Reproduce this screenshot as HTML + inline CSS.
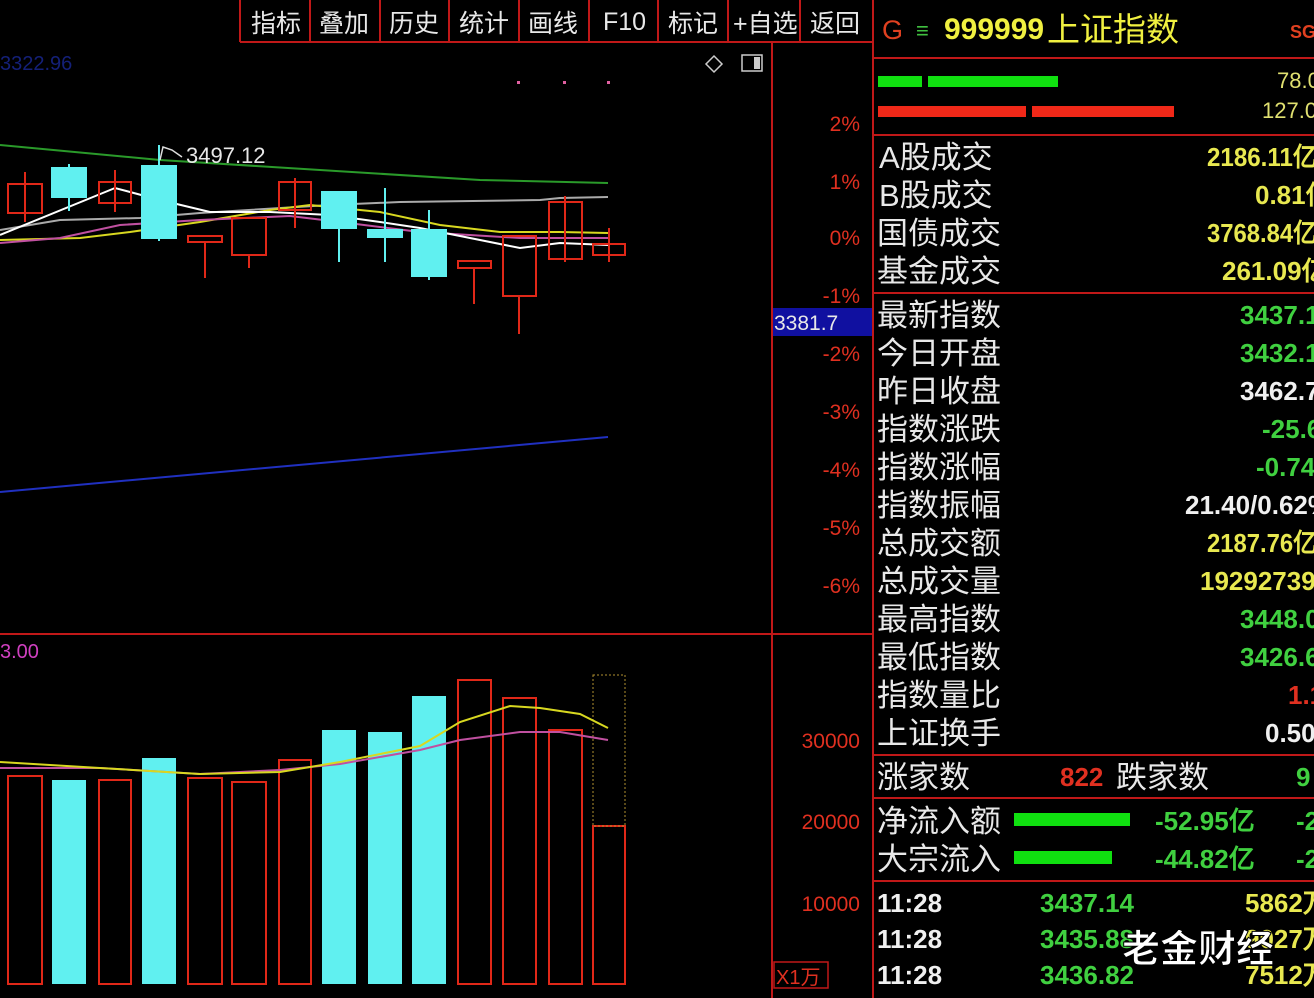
<!DOCTYPE html>
<html><head><meta charset="utf-8"><style>
html,body{margin:0;padding:0;background:#000;width:1314px;height:998px;overflow:hidden}
svg{display:block}
.lb{font-family:"Liberation Sans","Noto Sans CJK SC",sans-serif;font-size:31px;fill:#e8e8e8}
.v{font-family:"Liberation Sans",sans-serif;font-size:26px;font-weight:bold}
.ax{font-family:"Liberation Sans",sans-serif;font-size:21px;fill:#e03020}
.tb{font-family:"Liberation Sans","Noto Sans CJK SC",sans-serif;font-size:25px;fill:#e8e8e8}
</style></head><body>
<svg width="1314" height="998" viewBox="0 0 1314 998" xmlns="http://www.w3.org/2000/svg">
<rect width="1314" height="998" fill="#000"/>
<g stroke="#c01818" stroke-width="2">
<line x1="240" y1="0" x2="240" y2="42"/><line x1="310" y1="0" x2="310" y2="42"/><line x1="380" y1="0" x2="380" y2="42"/><line x1="449" y1="0" x2="449" y2="42"/><line x1="519" y1="0" x2="519" y2="42"/><line x1="589" y1="0" x2="589" y2="42"/><line x1="658" y1="0" x2="658" y2="42"/><line x1="728" y1="0" x2="728" y2="42"/><line x1="800" y1="0" x2="800" y2="42"/>
<line x1="240" y1="42" x2="872" y2="42"/>
<line x1="772" y1="42" x2="772" y2="998"/>
<line x1="873" y1="0" x2="873" y2="998"/>
<line x1="0" y1="634" x2="872" y2="634"/>
<line x1="873" y1="58" x2="1314" y2="58"/>
<line x1="873" y1="135" x2="1314" y2="135"/>
<line x1="873" y1="293" x2="1314" y2="293"/>
<line x1="873" y1="755" x2="1314" y2="755"/>
<line x1="873" y1="798" x2="1314" y2="798"/>
<line x1="873" y1="881" x2="1314" y2="881"/>
</g>
<g class="tb">
<text x="251" y="32">指标</text><text x="319" y="32">叠加</text><text x="389" y="32">历史</text><text x="459" y="32">统计</text><text x="528" y="32">画线</text><text x="603" y="30">F10</text><text x="668" y="32">标记</text><text x="733" y="32">+自选</text><text x="810" y="32">返回</text>
</g>
<text x="0" y="70" font-family="Liberation Sans" font-size="20" fill="#142078">3322.96</text>
<path d="M714 56 L722 64 L714 72 L706 64Z" fill="none" stroke="#ccc" stroke-width="1.5"/>
<rect x="742" y="55" width="20" height="16" fill="none" stroke="#ccc" stroke-width="1.5"/><rect x="754" y="57" width="6" height="12" fill="#ccc"/>
<g fill="#e060a0"><rect x="517" y="81" width="3" height="3"/><rect x="563" y="81" width="3" height="3"/><rect x="607" y="81" width="3" height="3"/></g>
<g class="ax" text-anchor="end">
<text x="860" y="131">2%</text><text x="860" y="189">1%</text><text x="860" y="245">0%</text><text x="860" y="303">-1%</text><text x="860" y="361">-2%</text><text x="860" y="419">-3%</text><text x="860" y="477">-4%</text><text x="860" y="535">-5%</text><text x="860" y="593">-6%</text>
<text x="860" y="748">30000</text><text x="860" y="829">20000</text><text x="860" y="911">10000</text>
</g>
<rect x="773" y="308" width="99" height="28" fill="#1010a0"/>
<text x="774" y="330" font-family="Liberation Sans" font-size="21" fill="#e8e8e8">3381.7</text>
<rect x="774" y="962" width="54" height="26" fill="none" stroke="#c01818" stroke-width="1.5"/>
<text x="776" y="984" font-family="Liberation Sans,Noto Sans CJK SC,sans-serif" font-size="20" fill="#e03020">X1万</text>
<g fill="none" stroke-width="2">
<polyline stroke="#2a9a2a" points="0,145 160,160 480,180 608,183"/>
<polyline stroke="#2030c0" points="0,492 608,437"/>
<polyline stroke="#aaa" points="0,230 60,220 140,218 200,213 330,205 400,202 540,200 560,198 608,197"/>
<polyline stroke="#d8d820" points="0,240 80,238 130,232 200,222 270,210 310,205 380,212 440,225 500,232 560,232 608,233"/>
<polyline stroke="#c050a0" points="0,243 60,238 120,225 200,220 290,216 340,222 420,232 520,238 608,238"/>
<polyline stroke="#fff" points="0,235 115,188 160,200 210,212 270,212 330,215 380,222 420,228 480,240 520,248 560,243 608,245"/>
</g>
<g stroke-width="2">
<g stroke="#e02818" fill="none">
<line x1="25" y1="172" x2="25" y2="222"/><rect x="8" y="184" width="34" height="29"/>
<line x1="115" y1="170" x2="115" y2="212"/><rect x="99" y="182" width="32" height="21"/>
<line x1="205" y1="242" x2="205" y2="278"/><rect x="188" y="236" width="34" height="6"/>
<line x1="249" y1="255" x2="249" y2="268"/><rect x="232" y="218" width="34" height="37"/>
<line x1="295" y1="178" x2="295" y2="228"/><rect x="279" y="182" width="32" height="28"/>
<line x1="474" y1="268" x2="474" y2="304"/><rect x="458" y="261" width="33" height="7"/>
<line x1="519" y1="296" x2="519" y2="334"/><rect x="503" y="236" width="33" height="60"/>
<line x1="565" y1="196" x2="565" y2="262"/><rect x="549" y="202" width="33" height="57"/>
<line x1="609" y1="228" x2="609" y2="262"/><rect x="593" y="244" width="32" height="11"/>
</g>
<g stroke="#60f0f0" fill="#60f0f0">
<line x1="69" y1="164" x2="69" y2="211"/><rect x="52" y="168" width="34" height="29"/>
<line x1="159" y1="145" x2="159" y2="241"/><rect x="142" y="166" width="34" height="72"/>
<line x1="339" y1="192" x2="339" y2="262"/><rect x="322" y="192" width="34" height="36"/>
<line x1="385" y1="188" x2="385" y2="262"/><rect x="368" y="230" width="34" height="7"/>
<line x1="429" y1="210" x2="429" y2="280"/><rect x="412" y="230" width="34" height="46"/>
</g>
</g>
<text x="186" y="163" font-family="Liberation Sans" font-size="22" fill="#e8e8e8">3497.12</text>
<polyline points="160,160 163,147 172,150 182,157" fill="none" stroke="#ddd" stroke-width="1.5"/>
<text x="0" y="658" font-family="Liberation Sans" font-size="20" fill="#d040c0">3.00</text>
<g stroke-width="2">
<g stroke="#e02818" fill="none">
<rect x="8" y="776" width="34" height="208"/><rect x="99" y="780" width="32" height="204"/><rect x="188" y="778" width="34" height="206"/><rect x="232" y="782" width="34" height="202"/><rect x="279" y="760" width="32" height="224"/><rect x="458" y="680" width="33" height="304"/><rect x="503" y="698" width="33" height="286"/><rect x="549" y="730" width="33" height="254"/><rect x="593" y="826" width="32" height="158"/>
</g>
<rect x="593" y="675" width="32" height="151" fill="none" stroke="#b09030" stroke-width="1" stroke-dasharray="2,2"/>
<g fill="#60f0f0" stroke="none">
<rect x="52" y="780" width="34" height="204"/><rect x="142" y="758" width="34" height="226"/><rect x="322" y="730" width="34" height="254"/><rect x="368" y="732" width="34" height="252"/><rect x="412" y="696" width="34" height="288"/>
</g>
</g>
<g fill="none" stroke-width="2">
<polyline stroke="#c050a0" points="0,768 100,768 200,774 280,770 340,764 420,750 460,740 520,732 560,732 608,740"/>
<polyline stroke="#d8d820" points="0,762 100,768 200,774 280,772 340,762 420,746 460,722 510,706 540,708 580,714 608,728"/>
</g>
<text x="882" y="39" font-family="Liberation Sans" font-size="27" fill="#e04020">G</text>
<text x="916" y="38" font-family="Liberation Sans" font-size="22" fill="#40c040">≡</text>
<text x="944" y="39" font-family="Liberation Sans" font-size="30" font-weight="bold" fill="#f0f040">999999</text>
<text x="1047" y="41" font-family="Liberation Sans,Noto Sans CJK SC,sans-serif" font-size="33" fill="#f0f040">上证指数</text>
<text x="1290" y="38" font-family="Liberation Sans" font-size="18" font-weight="bold" fill="#e04020">SG</text>
<rect x="878" y="76" width="44" height="11" fill="#10e010"/><rect x="928" y="76" width="130" height="11" fill="#10e010"/>
<rect x="878" y="106" width="148" height="11" fill="#f02818"/><rect x="1032" y="106" width="142" height="11" fill="#f02818"/>
<text x="1277" y="88" font-family="Liberation Sans" font-size="22" fill="#e0e070">78.0</text>
<text x="1262" y="118" font-family="Liberation Sans" font-size="22" fill="#e0e070">127.0</text>
<g class="lb">
<text x="879" y="168">A股成交</text><text x="879" y="206">B股成交</text><text x="877" y="244">国债成交</text><text x="877" y="282">基金成交</text>
<text x="877" y="326">最新指数</text><text x="877" y="364">今日开盘</text><text x="877" y="402">昨日收盘</text><text x="877" y="440">指数涨跌</text><text x="877" y="478">指数涨幅</text><text x="877" y="516">指数振幅</text><text x="877" y="554">总成交额</text><text x="877" y="592">总成交量</text><text x="877" y="630">最高指数</text><text x="877" y="668">最低指数</text><text x="877" y="706">指数量比</text><text x="877" y="744">上证换手</text>
<text x="877" y="788">涨家数</text><text x="1116" y="788">跌家数</text>
<text x="877" y="832">净流入额</text><text x="877" y="870">大宗流入</text>
</g>
<g class="v">
<text x="1207" y="166" fill="#e8e850" textLength="110" lengthAdjust="spacingAndGlyphs">2186.11亿</text><text x="1255" y="204" fill="#e8e850">0.81亿</text><text x="1207" y="242" fill="#e8e850" textLength="110" lengthAdjust="spacingAndGlyphs">3768.84亿</text><text x="1222" y="280" fill="#e8e850">261.09亿</text>
<text x="1240" y="324" fill="#40d040">3437.14</text><text x="1240" y="362" fill="#40d040">3432.18</text><text x="1240" y="400" fill="#f0f0f0">3462.75</text><text x="1262" y="438" fill="#40d040">-25.61</text><text x="1256" y="476" fill="#40d040">-0.74%</text><text x="1185" y="514" fill="#f0f0f0">21.40/0.62%</text><text x="1207" y="552" fill="#e8e850" textLength="110" lengthAdjust="spacingAndGlyphs">2187.76亿</text><text x="1200" y="590" fill="#e8e850">192927393</text><text x="1240" y="628" fill="#40d040">3448.07</text><text x="1240" y="666" fill="#40d040">3426.66</text><text x="1288" y="704" fill="#e03020">1.1</text><text x="1265" y="742" fill="#f0f0f0">0.50%</text>
<text x="1060" y="786" fill="#e03020">822</text><text x="1296" y="786" fill="#40d040">9</text>
<text x="1155" y="830" fill="#40d040">-52.95亿</text><text x="1296" y="830" fill="#40d040">-2</text>
<text x="1155" y="868" fill="#40d040">-44.82亿</text><text x="1296" y="868" fill="#40d040">-2</text>
<text x="877" y="912" fill="#f0f0f0">11:28</text><text x="877" y="948" fill="#f0f0f0">11:28</text><text x="877" y="984" fill="#f0f0f0">11:28</text>
<text x="1040" y="912" fill="#40d040">3437.14</text><text x="1040" y="948" fill="#40d040">3435.88</text><text x="1040" y="984" fill="#40d040">3436.82</text>
<text x="1245" y="912" fill="#e8e850">5862万</text><text x="1245" y="948" fill="#e8e850">9027万</text><text x="1245" y="984" fill="#e8e850">7512万</text>
</g>
<rect x="1014" y="813" width="116" height="13" fill="#10e010"/><rect x="1014" y="851" width="98" height="13" fill="#10e010"/>
<text x="1122" y="962" font-family="Liberation Sans,Noto Sans CJK SC,sans-serif" font-size="38" font-weight="bold" fill="#fff" stroke="#000" stroke-width="1">老金财经</text>
</svg>
</body></html>
